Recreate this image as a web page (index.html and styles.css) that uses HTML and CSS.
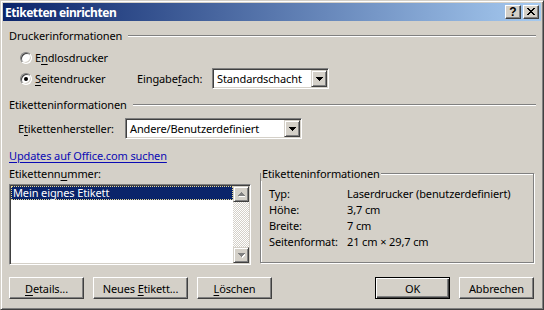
FILE: index.html
```html
<!DOCTYPE html>
<html lang="de">
<head>
<meta charset="utf-8">
<title>Etiketten einrichten</title>
<link rel="stylesheet" href="styles.css">
</head>
<body>
<div class="window">
  <div class="titlebar">
    <span class="title">Etiketten einrichten</span>
    <div class="caption-btns">
      <span class="cbtn help">?</span>
      <span class="cbtn close"><svg width="8" height="7" viewBox="0 0 8 7" shape-rendering="crispEdges"><path d="M0 0h2v1H0zM6 0h2v1H6zM1 1h2v1H1zM5 1h2v1H5zM2 2h4v1H2zM3 3h2v1H3zM2 4h4v1H2zM1 5h2v1H1zM5 5h2v1H5zM0 6h2v1H0zM6 6h2v1H6z" fill="#000"/></svg></span>
    </div>
  </div>
  <div class="content">
    <div class="group-head"><span>Druckerinformationen</span><span class="etch"></span></div>
    <div class="radio-row r1">
      <span class="radio"></span>
      <span class="rlabel">E<u>n</u>dlosdrucker</span>
    </div>
    <div class="radio-row r2">
      <span class="radio checked"></span>
      <span class="rlabel wide"><u>S</u>eitendrucker</span>
      <span class="field-label fach">Eingabe<u>f</u>ach:</span>
      <div class="select s1">
        <span class="sel-text">Standardschacht</span>
        <span class="drop"><svg width="7" height="4" viewBox="0 0 7 4" shape-rendering="crispEdges"><path d="M0 0h7v1H0zM1 1h5v1H1zM2 2h3v1H2zM3 3h1v1H3z" fill="#000"/></svg></span>
      </div>
    </div>
    <div class="group-head g2"><span>Etiketteninformationen</span><span class="etch"></span></div>
    <div class="maker-row">
      <span class="field-label maker">E<u>t</u>ikettenhersteller:</span>
      <div class="select s2">
        <span class="sel-text">Andere/Benutzerdefiniert</span>
        <span class="drop"><svg width="7" height="4" viewBox="0 0 7 4" shape-rendering="crispEdges"><path d="M0 0h7v1H0zM1 1h5v1H1zM2 2h3v1H2zM3 3h1v1H3z" fill="#000"/></svg></span>
      </div>
    </div>
    <a class="link" href="#">Updates auf Office.com suchen</a>
    <div class="lower">
      <div class="list-col">
        <div class="list-label">Etikettenn<u>u</u>mmer:</div>
        <div class="listbox">
          <div class="items">
            <div class="item selected">Mein eignes Etikett</div>
          </div>
          <div class="scrollbar">
            <span class="sbtn"><svg width="7" height="5" viewBox="0 0 7 5" shape-rendering="crispEdges"><path d="M4 1h1v1H4zM5 2h1v1H5zM6 3h1v1H6zM1 4h6v1H1z" fill="#fff"/><path d="M3 0h1v1H3zM2 1h3v1H2zM1 2h5v1H1zM0 3h7v1H0z" fill="#808080"/></svg></span>
            <span class="track"></span>
            <span class="sbtn"><svg width="7" height="5" viewBox="0 0 7 5" shape-rendering="crispEdges"><path d="M1 1h7v1H1zM2 2h5v1H2zM3 3h3v1H3zM4 4h1v1H4z" fill="#fff"/><path d="M0 0h7v1H0zM1 1h5v1H1zM2 2h3v1H2zM3 3h1v1H3z" fill="#808080"/></svg></span>
          </div>
        </div>
      </div>
      <fieldset class="info">
        <legend>Etiketteninformationen</legend>
        <div class="info-grid">
          <span>Typ:</span><span>Laserdrucker (benutzerdefiniert)</span>
          <span>Höhe:</span><span>3,7 cm</span>
          <span>Breite:</span><span>7 cm</span>
          <span>Seitenformat:</span><span>21 cm × 29,7 cm</span>
        </div>
      </fieldset>
    </div>
    <div class="buttons">
      <span class="btn"><span><u>D</u>etails...</span></span>
      <span class="btn wide"><span>Neues <u>E</u>tikett...</span></span>
      <span class="btn"><span><u>L</u>öschen</span></span>
      <span class="btn default"><span>OK</span></span>
      <span class="btn"><span>Abbrechen</span></span>
    </div>
  </div>
</div>
</body>
</html>
```

FILE: styles.css
```css
html, body {
  margin: 0;
  padding: 0;
}
body {
  font-family: "Noto Sans", "DejaVu Sans", sans-serif;
  font-size: 11px;
  line-height: 15px;
  letter-spacing: -0.12px;
  color: #000;
  background: #d4d0c8;
}
u {
  text-decoration-thickness: 1px;
  text-underline-offset: 2px;
}
.window {
  box-sizing: border-box;
  width: 544px;
  height: 310px;
  background: #d4d0c8;
  border: 1px solid;
  border-color: #d4d0c8 #404040 #404040 #d4d0c8;
  box-shadow: inset 1px 1px #fff, inset -1px -1px #808080;
  padding: 2px;
  display: flex;
  flex-direction: column;
}
.titlebar {
  height: 18px;
  flex: none;
  background: linear-gradient(to right, #0a246a, #a6caf0);
  display: flex;
  align-items: center;
  padding: 0 2px;
}
.title {
  flex: 1;
  color: #fff;
  font-weight: bold;
  font-size: 12px;
  letter-spacing: -0.45px;
}
.caption-btns {
  display: flex;
  gap: 2px;
}
.cbtn {
  box-sizing: border-box;
  width: 16px;
  height: 14px;
  background: #d4d0c8;
  border: 1px solid;
  border-color: #fff #404040 #404040 #fff;
  box-shadow: inset -1px -1px #808080;
  display: flex;
  align-items: center;
  justify-content: center;
}
.cbtn.help {
  font-family: "Liberation Sans", sans-serif;
  font-weight: bold;
  font-size: 12px;
  line-height: 12px;
  letter-spacing: 0;
  padding-bottom: 1px;
}
.cbtn svg { display: block; margin-bottom: 1px; }
.content {
  flex: 1;
  display: flex;
  flex-direction: column;
  padding: 0 7px 0 6px;
}
.group-head {
  display: flex;
  align-items: center;
  height: 15px;
  margin-top: 7px;
}
.group-head.g2 { margin-top: 8px; }
.etch {
  flex: 1;
  height: 0;
  margin-left: 6px;
  margin-right: -2px;
  border-top: 1px solid #808080;
  border-bottom: 1px solid #fff;
}
.radio-row {
  display: flex;
  align-items: center;
  padding-left: 11px;
}
.radio-row.r1 { height: 15px; margin-top: 7px; }
.radio-row.r2 { height: 21px; margin-top: 3px; }
.radio {
  box-sizing: border-box;
  width: 12px;
  height: 12px;
  border-radius: 50%;
  background: #fff;
  border: 1px solid;
  border-color: #808080 #fff #fff #808080;
  box-shadow: inset 1px 1px #404040, inset -1px -1px #d4d0c8;
  display: flex;
  align-items: center;
  justify-content: center;
  flex: none;
}
.radio.checked::after {
  content: "";
  width: 4px;
  height: 4px;
  border-radius: 50%;
  background: #000;
}
.rlabel { margin-left: 3px; }
.rlabel.wide { width: 102px; }
.field-label.fach { width: 75px; }
.select {
  box-sizing: border-box;
  height: 21px;
  background: #fff;
  border: 1px solid;
  border-color: #808080 #fff #fff #808080;
  box-shadow: inset 1px 1px #404040, inset -1px -1px #d4d0c8;
  display: flex;
  align-items: center;
  padding: 1px;
}
.select.s1 { width: 117px; }
.select.s2 { width: 177px; }
.sel-text {
  flex: 1;
  padding-left: 3px;
  white-space: nowrap;
  overflow: hidden;
}
.drop {
  box-sizing: border-box;
  width: 16px;
  height: 17px;
  background: #d4d0c8;
  border: 1px solid;
  border-color: #d4d0c8 #404040 #404040 #d4d0c8;
  box-shadow: inset 1px 1px #fff, inset -1px -1px #808080;
  display: flex;
  align-items: center;
  justify-content: center;
}
.drop svg { display: block; }
.maker-row {
  display: flex;
  align-items: center;
  height: 21px;
  margin-top: 6px;
  padding-left: 9px;
}
.field-label.maker { width: 107px; }
.link {
  margin-top: 9px;
  color: #0a0ab4;
  text-decoration: underline;
  text-decoration-thickness: 1px;
  text-underline-offset: 2px;
  align-self: flex-start;
}
.lower {
  display: flex;
  gap: 9px;
  margin-top: 3px;
}
.list-col {
  width: 242px;
  flex: none;
}
.list-label { height: 15px; }
.listbox {
  box-sizing: border-box;
  margin-top: 3px;
  height: 81px;
  background: #fff;
  border: 1px solid;
  border-color: #808080 #fff #fff #808080;
  box-shadow: inset 1px 1px #404040, inset -1px -1px #d4d0c8;
  padding: 1px;
  display: flex;
}
.items { flex: 1; }
.item {
  height: 14px;
  line-height: 12px;
  padding-left: 1px;
  white-space: nowrap;
  box-sizing: border-box;
}
.item.selected {
  background: #0a246a;
  color: #fff;
  border: 1px dotted #e8d890;
}
.scrollbar {
  width: 16px;
  display: flex;
  flex-direction: column;
}
.sbtn {
  box-sizing: border-box;
  width: 16px;
  height: 16px;
  background: #d4d0c8;
  border: 1px solid;
  border-color: #d4d0c8 #404040 #404040 #d4d0c8;
  box-shadow: inset 1px 1px #fff, inset -1px -1px #808080;
  display: flex;
  align-items: center;
  justify-content: center;
}
.sbtn svg { display: block; }
.track {
  flex: 1;
  background: repeating-conic-gradient(#fff 0 25%, #d4d0c8 0 50%) 0 0 / 2px 2px;
}
.info {
  box-sizing: border-box;
  flex: 1;
  margin: 0;
  height: 97px;
  padding: 5px 8px 0 8px;
  border: 1px solid #808080;
  box-shadow: inset 1px 1px #fff, 1px 1px #fff;
  min-width: 0;
}
.info legend {
  padding: 0 1px;
  margin-left: -8px;
  background: #d4d0c8;
  line-height: 15px;
}
.info-grid {
  display: grid;
  grid-template-columns: 78px auto;
  line-height: 16px;
}
.buttons {
  display: flex;
  gap: 9px;
  margin-top: 12px;
}
.btn {
  box-sizing: border-box;
  width: 75px;
  height: 22px;
  background: #d4d0c8;
  border: 1px solid;
  border-color: #fff #404040 #404040 #fff;
  box-shadow: inset -1px -1px #808080;
  display: flex;
  align-items: center;
  justify-content: center;
}
.btn.wide { width: 95px; }
.btn.default {
  margin-left: auto;
  border-color: #000;
  box-shadow: inset 1px 1px #fff, inset -1px -1px #404040, inset -2px -2px #808080;
}
```
